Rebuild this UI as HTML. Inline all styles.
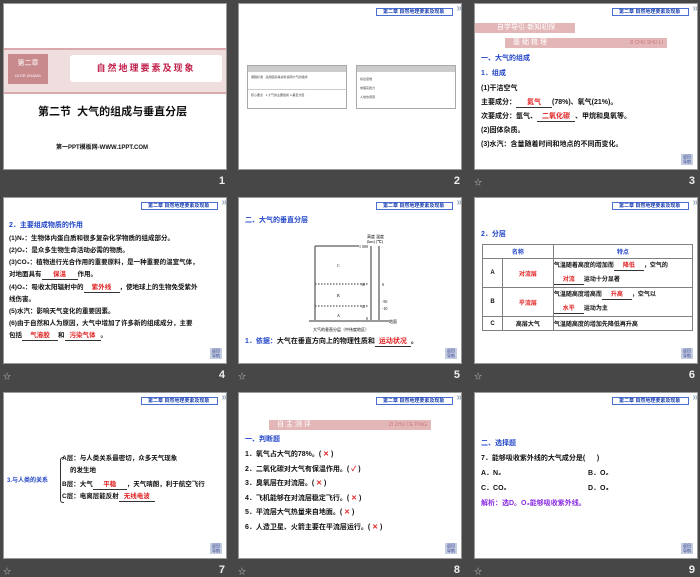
<!DOCTYPE html><html><head><meta charset="utf-8"><style>
*{margin:0;padding:0;box-sizing:border-box}
body{width:700px;height:577px;background:#474747;position:relative;overflow:hidden;font-family:"Liberation Sans","Noto Sans CJK SC",sans-serif}
.s{position:absolute;width:224px;height:167px;background:#fff;border:1px solid #999;overflow:hidden}
.n{position:absolute;color:#eee;font-size:11px;font-weight:bold;width:20px;text-align:right}
.st{position:absolute;color:#bbb;font-size:8px}
.tag{position:absolute;left:137px;top:4px;width:77px;height:8px;border:1px solid #4a6fd0;font-size:5px;color:#1a3fb0;font-weight:bold;line-height:6px;padding-left:6px;white-space:nowrap}
.tag:after{content:"»";position:absolute;right:-10px;top:-3px;color:#9ab;font-size:10px}
.bk{position:absolute;right:4px;bottom:4px;width:12px;height:11px;background:#c5cde0;font-size:4px;color:#238;line-height:5px;text-align:center}
.t{position:absolute;font-size:7px;color:#111;white-space:nowrap;line-height:12px;font-weight:bold}
.b{color:#2346c8}.r{color:#e02020}
.u{display:inline-block;border-bottom:1px solid #333;text-align:center;line-height:8px}
.band{position:absolute;height:10px;background:#e3b7b8;color:#fff;font-size:7px;line-height:10px}
</style></head><body>

<!-- slide 1 -->
<div class="s" style="left:3px;top:3px">
<div style="position:absolute;left:0;top:44px;width:224px;height:46px;background:#f0dedf;border-top:2px solid #d9a9ab;border-bottom:2px solid #d9a9ab"></div>
<div style="position:absolute;left:4px;top:50px;width:40px;height:30px;background:#c98a8d;color:#fff;font-size:7px;text-align:center;line-height:12px;padding-top:4px">第二章<br><span style="font-size:4px">DI ER ZHANG</span></div>
<div style="position:absolute;left:66px;top:51px;width:152px;height:27px;background:#fff;border-radius:3px;color:#c0204a;font-size:9px;font-weight:bold;text-align:center;line-height:27px;letter-spacing:2px">自然地理要素及现象</div>
<div class="t" style="left:34px;top:102px;font-size:11px">第二节&nbsp; 大气的组成与垂直分层</div>
<div class="t" style="left:52px;top:138px;font-size:6px">第一PPT模板网-WWW.1PPT.COM</div>
</div>
<div class="n" style="left:205px;top:175px">1</div>

<!-- slide 2 -->
<div class="s" style="left:238px;top:3px">
<div class="tag">第二章 自然地理要素及现象</div>
<div style="position:absolute;left:8px;top:61px;width:100px;height:44px;border:1px solid #aaa;font-size:3px;color:#444"><div style="background:#ccc;height:6px"></div><div style="border-bottom:1px solid #ccc;height:18px;padding:3px">课程标准 &nbsp; 运用图表等资料说明大气的组成</div><div style="padding:3px">核心要点 &nbsp; 1.大气的主要组成 2.垂直分层</div></div>
<div style="position:absolute;left:117px;top:61px;width:100px;height:44px;border:1px solid #aaa;font-size:3px;color:#444"><div style="background:#ccc;height:6px"></div><div style="padding:3px;line-height:9px">综合思维<br>地理实践力<br>人地协调观</div></div>
</div>
<div class="n" style="left:440px;top:175px">2</div>

<!-- slide 3 -->
<div class="s" style="left:474px;top:3px">
<div class="tag">第二章 自然地理要素及现象</div>
<div class="band" style="left:0;top:19px;width:100px;padding-left:22px">自学导引·新知初探</div>
<div class="band" style="left:30px;top:34px;width:162px;padding-left:8px">基 础 梳 理<span style="float:right;margin-right:4px;color:#c77;font-size:5px">JI CHU SHU LI</span></div>
<div class="t b" style="left:6px;top:49px">一、大气的组成</div>
<div class="t b" style="left:6px;top:64px">1．组成</div>
<div class="t" style="left:6px;top:79px">(1)干洁空气</div>
<div class="t" style="left:6px;top:93px">主要成分：<span class="u r" style="width:36px">氮气</span>(78%)、氧气(21%)。</div>
<div class="t" style="left:6px;top:107px">次要成分：氩气、<span class="u r" style="width:38px">二氧化碳</span>、甲烷和臭氧等。</div>
<div class="t" style="left:6px;top:121px">(2)固体杂质。</div>
<div class="t" style="left:6px;top:135px">(3)水汽：含量随着时间和地点的不同而变化。</div>
<div class="bk">返回<br>导航</div>
</div>
<div class="st" style="left:474px;top:177px">☆</div>
<div class="n" style="left:675px;top:175px">3</div>

<!-- slide 4 -->
<div class="s" style="left:3px;top:197px">
<div class="tag">第二章 自然地理要素及现象</div>
<div class="t b" style="left:5px;top:22px">2．主要组成物质的作用</div>
<div class="t" style="left:5px;top:35px;font-size:6.5px">(1)N₂：生物体内蛋白质和很多复杂化学物质的组成部分。</div>
<div class="t" style="left:5px;top:47px;font-size:6.5px">(2)O₂：是众多生物生命活动必需的物质。</div>
<div class="t" style="left:5px;top:59px;font-size:6.5px">(3)CO₂：植物进行光合作用的重要原料，是一种重要的温室气体，</div>
<div class="t" style="left:5px;top:71px;font-size:6.5px">对地面具有<span class="u r" style="width:36px">保温</span>作用。</div>
<div class="t" style="left:5px;top:84px;font-size:6.5px">(4)O₃：吸收太阳辐射中的<span class="u r" style="width:36px">紫外线</span>，使地球上的生物免受紫外</div>
<div class="t" style="left:5px;top:96px;font-size:6.5px">线伤害。</div>
<div class="t" style="left:5px;top:108px;font-size:6.5px">(5)水汽：影响天气变化的重要因素。</div>
<div class="t" style="left:5px;top:120px;font-size:6.5px">(6)由于自然和人为原因，大气中增加了许多新的组成成分，主要</div>
<div class="t" style="left:5px;top:132px;font-size:6.5px">包括<span class="u r" style="width:36px">气溶胶</span>和<span class="u r" style="width:36px">污染气体</span>。</div>
<div class="bk">返回<br>导航</div>
</div>
<div class="st" style="left:3px;top:371px">☆</div>
<div class="n" style="left:205px;top:369px">4</div>

<!-- slide 5 -->
<div class="s" style="left:238px;top:197px">
<div class="tag">第二章 自然地理要素及现象</div>
<div class="t b" style="left:6px;top:17px">二、大气的垂直分层</div>
<svg style="position:absolute;left:70px;top:36px" width="90" height="105" font-size="4" font-family="Liberation Serif">
<text x="58" y="4">高度 温度</text><text x="58" y="9">(km) (℃)</text>
<line x1="6" y1="12" x2="6" y2="86" stroke="#333"/>
<line x1="6" y1="12" x2="50" y2="12" stroke="#333"/>
<text x="50" y="14">1 000</text>
<line x1="62" y1="12" x2="62" y2="86" stroke="#333"/><line x1="70" y1="12" x2="70" y2="86" stroke="#333"/>
<line x1="6" y1="50" x2="60" y2="50" stroke="#333" stroke-dasharray="1.5"/><text x="52" y="52">50</text><text x="73" y="52">0</text>
<line x1="6" y1="72" x2="60" y2="72" stroke="#333" stroke-dasharray="1.5"/><text x="52" y="74">12</text><text x="73" y="69">-50</text><text x="73" y="76">-10</text>
<text x="28" y="33">C</text><text x="28" y="63">B</text><text x="28" y="83">A</text><text x="57" y="86">0</text>
<line x1="0" y1="87" x2="80" y2="87" stroke="#333"/><text x="80" y="89">地面</text>
<text x="4" y="97">大气的垂直分层（中纬度地区）</text></svg>
<div class="t" style="left:6px;top:138px"><span class="b">1．依据：</span>大气在垂直方向上的物理性质和<span class="u r" style="width:36px">运动状况</span>。</div>
<div class="bk">返回<br>导航</div>
</div>
<div class="st" style="left:238px;top:371px">☆</div>
<div class="n" style="left:440px;top:369px">5</div>

<!-- slide 6 -->
<div class="s" style="left:474px;top:197px">
<div class="tag">第二章 自然地理要素及现象</div>
<div class="t b" style="left:6px;top:31px">2．分层</div>
<table style="position:absolute;left:7px;top:46px;width:211px;border-collapse:collapse;font-size:6px;font-weight:bold;color:#111" border="1">
<tr style="height:14px;color:#2346c8"><td colspan="2" style="text-align:center;width:62px">名称</td><td style="text-align:center">特点</td></tr>
<tr style="height:29px"><td style="text-align:center;width:20px">A</td><td class="r" style="text-align:center">对流层</td><td style="line-height:14px">气温随着高度的增加而<span class="u r" style="width:30px">降低</span>，空气的<br><span class="u r" style="width:30px">对流</span>运动十分显著</td></tr>
<tr style="height:29px"><td style="text-align:center">B</td><td class="r" style="text-align:center">平流层</td><td style="line-height:14px">气温随高度增高而<span class="u r" style="width:30px">升高</span>，空气以<br><span class="u r" style="width:30px">水平</span>运动为主</td></tr>
<tr style="height:14px"><td style="text-align:center">C</td><td style="text-align:center">高层大气</td><td>气温随高度的增加先降低再升高</td></tr></table>
<div class="bk">返回<br>导航</div>
</div>
<div class="st" style="left:474px;top:371px">☆</div>
<div class="n" style="left:675px;top:369px">6</div>

<!-- slide 7 -->
<div class="s" style="left:3px;top:392px">
<div class="tag">第二章 自然地理要素及现象</div>
<div class="t b" style="left:3px;top:82px;font-size:6px">3.与人类的关系</div>
<div style="position:absolute;left:56px;top:64px;width:4px;height:46px;border:1px solid #333;border-right:none;border-radius:3px 0 0 3px"></div>
<div class="t" style="left:58px;top:60px;font-size:6.5px">A层：与人类关系最密切，众多天气现象</div>
<div class="t" style="left:66px;top:72px;font-size:6.5px">的发生地</div>
<div class="t" style="left:58px;top:86px;font-size:6.5px">B层：大气<span class="u r" style="width:34px">平稳</span>，天气晴朗，利于航空飞行</div>
<div class="t" style="left:58px;top:98px;font-size:6.5px">C层：电离层能反射<span class="u r" style="width:36px">无线电波</span></div>
<div class="bk">返回<br>导航</div>
</div>
<div class="st" style="left:3px;top:566px">☆</div>
<div class="n" style="left:205px;top:564px">7</div>

<!-- slide 8 -->
<div class="s" style="left:238px;top:392px">
<div class="tag">第二章 自然地理要素及现象</div>
<div class="band" style="left:30px;top:27px;width:162px;padding-left:8px">自 主 测 评<span style="float:right;margin-right:4px;color:#c77;font-size:5px">ZI ZHU CE PING</span></div>
<div class="t b" style="left:6px;top:41px">一、判断题</div>
<div class="t" style="left:6px;top:56px">1．氧气占大气的78%。(<span class="r"> ✕ </span>)</div>
<div class="t" style="left:6px;top:71px">2．二氧化碳对大气有保温作用。(<span class="r"> ✓ </span>)</div>
<div class="t" style="left:6px;top:85px">3．臭氧层在对流层。(<span class="r"> ✕ </span>)</div>
<div class="t" style="left:6px;top:100px">4．飞机能够在对流层稳定飞行。(<span class="r"> ✕ </span>)</div>
<div class="t" style="left:6px;top:114px">5．平流层大气热量来自地面。(<span class="r"> ✕ </span>)</div>
<div class="t" style="left:6px;top:129px">6．人造卫星、火箭主要在平流层运行。(<span class="r"> ✕ </span>)</div>
<div class="bk">返回<br>导航</div>
</div>
<div class="st" style="left:238px;top:566px">☆</div>
<div class="n" style="left:440px;top:564px">8</div>

<!-- slide 9 -->
<div class="s" style="left:474px;top:392px">
<div class="tag">第二章 自然地理要素及现象</div>
<div class="t b" style="left:6px;top:45px">二、选择题</div>
<div class="t" style="left:6px;top:60px">7．能够吸收紫外线的大气成分是(&nbsp;&nbsp;&nbsp;&nbsp;&nbsp;&nbsp;)</div>
<div class="t" style="left:6px;top:75px">A．N₂</div><div class="t" style="left:113px;top:75px">B．O₂</div>
<div class="t" style="left:6px;top:90px">C．CO₂</div><div class="t" style="left:113px;top:90px">D．O₃</div>
<div class="t" style="left:6px;top:105px;color:#8a2be2">解析：选D。O₃能够吸收紫外线。</div>
<div class="bk">返回<br>导航</div>
</div>
<div class="st" style="left:474px;top:566px">☆</div>
<div class="n" style="left:675px;top:564px">9</div>
</body></html>
